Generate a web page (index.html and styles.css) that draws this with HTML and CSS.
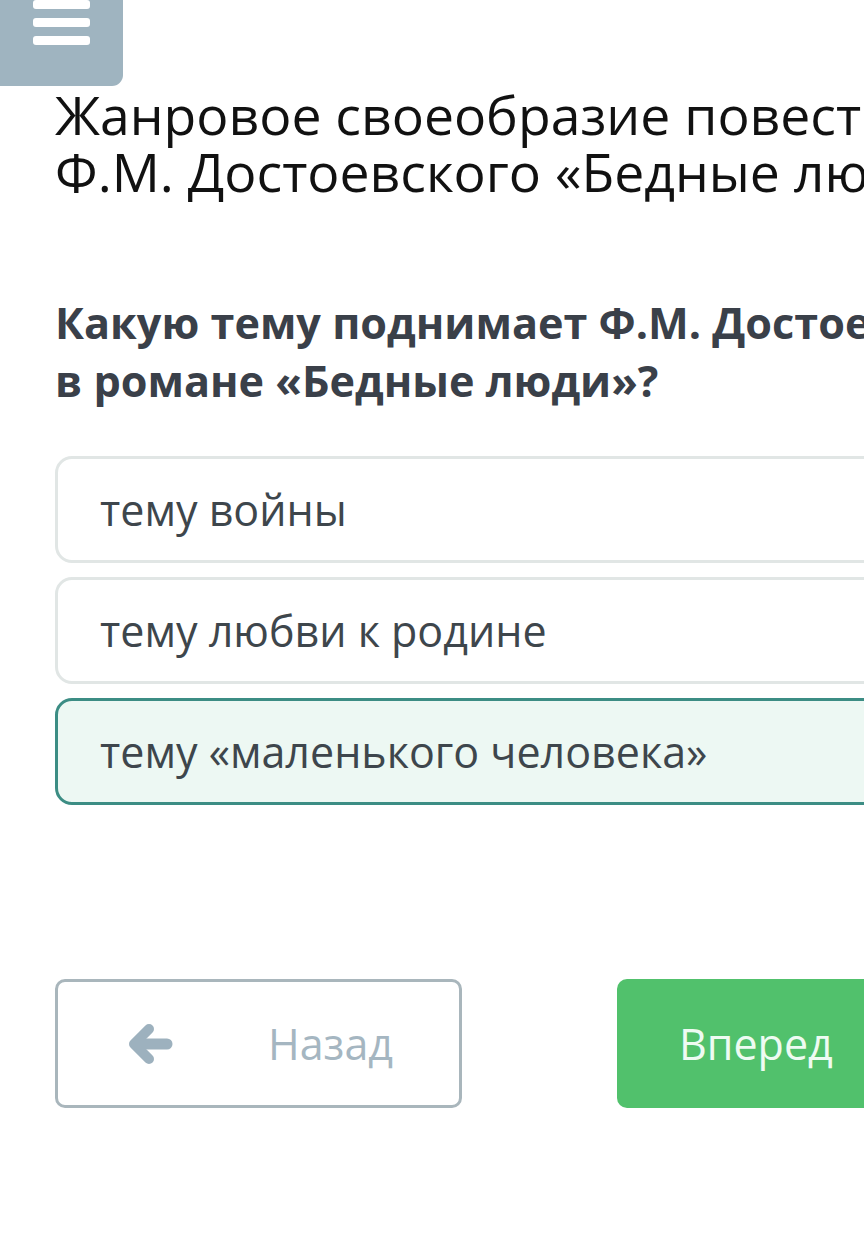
FILE: index.html
```html
<!DOCTYPE html>
<html lang="ru">
<head>
<meta charset="utf-8">
<link rel="stylesheet" href="styles.css">
</head>
<body>
<div class="page">
  <div class="menu-btn">
    <span class="bar"></span>
    <span class="bar"></span>
    <span class="bar"></span>
  </div>
  <div class="content">
    <h1 class="title">Жанровое своеобразие повести<br>Ф.М. Достоевского «Бедные люди»</h1>
    <h2 class="question">Какую тему поднимает Ф.М. Достоевский<br>в романе «Бедные люди»?</h2>
    <div class="options">
      <div class="option">тему войны</div>
      <div class="option">тему любви к родине</div>
      <div class="option selected">тему «маленького человека»</div>
    </div>
    <div class="nav">
      <button class="btn btn-back">
        <svg class="arrow" width="44" height="40" viewBox="0 0 44 40"><path d="M20 5 L5 20 L20 35" fill="none" stroke="currentColor" stroke-width="10" stroke-linecap="round" stroke-linejoin="round"/><path d="M8 20 H38" fill="none" stroke="currentColor" stroke-width="11" stroke-linecap="round"/></svg>
        <span>Назад</span>
      </button>
      <button class="btn btn-next">Вперед</button>
    </div>
  </div>
</div>
</body>
</html>
```

FILE: styles.css
```css
html, body {
  margin: 0;
  padding: 0;
  background: #ffffff;
  overflow: hidden;
}
.page {
  width: 1300px;
  font-family: "Open Sans", "Noto Sans", sans-serif;
}
.menu-btn {
  width: 123px;
  height: 94px;
  margin-top: -8px;
  padding-top: 8px;
  box-sizing: border-box;
  background: #9fb4c0;
  border-bottom-right-radius: 11px;
  display: flex;
  flex-direction: column;
  align-items: center;
  gap: 9px;
}
.bar {
  display: block;
  width: 57px;
  height: 9px;
  border-radius: 3px;
  background: #ffffff;
}
.content {
  padding: 0 0 0 55px;
  width: 969px;
}
.title {
  margin: 0;
  font-weight: 400;
  font-size: 53.5px;
  line-height: 57px;
  color: #111111;
  white-space: nowrap;
}
.question {
  margin: 94px 0 0;
  font-weight: 700;
  font-size: 43.2px;
  line-height: 58px;
  color: #3a4049;
  white-space: nowrap;
}
.options {
  margin-top: 46px;
  display: flex;
  flex-direction: column;
  gap: 14px;
}
.option {
  height: 107px;
  box-sizing: border-box;
  border: 3px solid #e1e6e5;
  border-radius: 17px;
  padding: 0 0 0 42px;
  display: flex;
  align-items: center;
  font-size: 43px;
  color: #3e464c;
}
.option.selected {
  border-color: #3c8d84;
  background: #edf8f3;
}
.nav {
  margin-top: 174px;
  display: flex;
  justify-content: space-between;
}
.btn {
  width: 407px;
  height: 129px;
  box-sizing: border-box;
  border-radius: 10px;
  font-family: "Open Sans", "Noto Sans", sans-serif;
  font-size: 43px;
  display: flex;
  align-items: center;
  padding: 0;
}
.btn-back {
  background: #ffffff;
  border: 3px solid #a9b6bc;
  color: #a5b6c1;
  padding-left: 71px;
}
.btn-back .arrow {
  color: #9db1be;
  margin-right: 95px;
}
.btn-next {
  background: #51c16c;
  border: none;
  color: #eefbf2;
  padding-left: 62px;
}
```
